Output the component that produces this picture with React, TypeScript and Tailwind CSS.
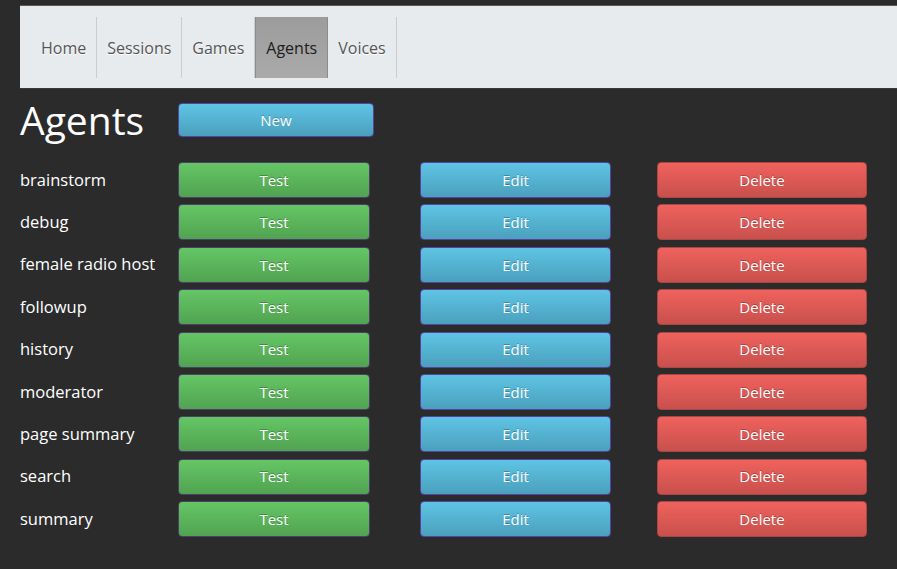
const agents = [
  "brainstorm",
  "debug",
  "female radio host",
  "followup",
  "history",
  "moderator",
  "page summary",
  "search",
  "summary",
];

const navItems = ["Home", "Sessions", "Games", "Agents", "Voices"];

function Btn({ kind, children, className = "" }: { kind: "test" | "edit" | "delete" | "new"; children: string; className?: string }) {
  const styles = {
    test: "bg-gradient-to-b from-[#65c665] to-[#51a351] border-[#4b3f6e]",
    edit: "bg-gradient-to-b from-[#5fc4e4] to-[#4aa0bd] border-[#5641a8]",
    new: "bg-gradient-to-b from-[#5fc4e4] to-[#4aa0bd] border-[#5641a8]",
    delete: "bg-gradient-to-b from-[#f0625d] to-[#c8504c] border-[#a84744]",
  };
  return (
    <button
      className={`rounded-[4px] border text-[15px] text-white [text-shadow:0_-1px_0_rgba(0,0,0,0.25)] ${styles[kind]} ${className}`}
    >
      {children}
    </button>
  );
}

export default function App() {
  return (
    <div className="min-h-[569px] bg-[#2b2b2b] pl-5 pt-[5px] font-['Open_Sans',sans-serif]">
      <nav className="flex h-[84px] items-start border-t border-[#5a5a5a] border-b border-b-[#3a3a3a] bg-[#e8ebee] pl-[11px] pt-[11px]">
        {navItems.map((item) => (
          <div
            key={item}
            className={`flex h-[61px] items-center border-r border-[#c9ccd0] px-[10px] text-[16px] ${
              item === "Agents"
                ? "bg-gradient-to-b from-[#9c9c9c] to-[#aaaaaa] text-[#1c1c1c] border-l border-l-[#8c8c8c] border-r-[#8c8c8c]"
                : "text-[#555] [text-shadow:0_1px_0_#fff]"
            }`}
          >
            {item}
          </div>
        ))}
      </nav>

      <div className="mt-[14px] flex items-center">
        <h1 className="w-[158px] text-[39px] leading-[34px] text-white">Agents</h1>
        <Btn kind="new" className="h-[34px] w-[196px]">
          New
        </Btn>
      </div>

      <div className="mt-[25px] flex flex-col gap-[6.4px]">
        {agents.map((name) => (
          <div key={name} className="flex items-center">
            <span className="w-[158px] text-[16.5px] text-white">{name}</span>
            <Btn kind="test" className="h-[36px] w-[192px]">
              Test
            </Btn>
            <Btn kind="edit" className="ml-[50px] h-[36px] w-[191px]">
              Edit
            </Btn>
            <Btn kind="delete" className="ml-[46px] h-[36px] w-[210px]">
              Delete
            </Btn>
          </div>
        ))}
      </div>
    </div>
  );
}
